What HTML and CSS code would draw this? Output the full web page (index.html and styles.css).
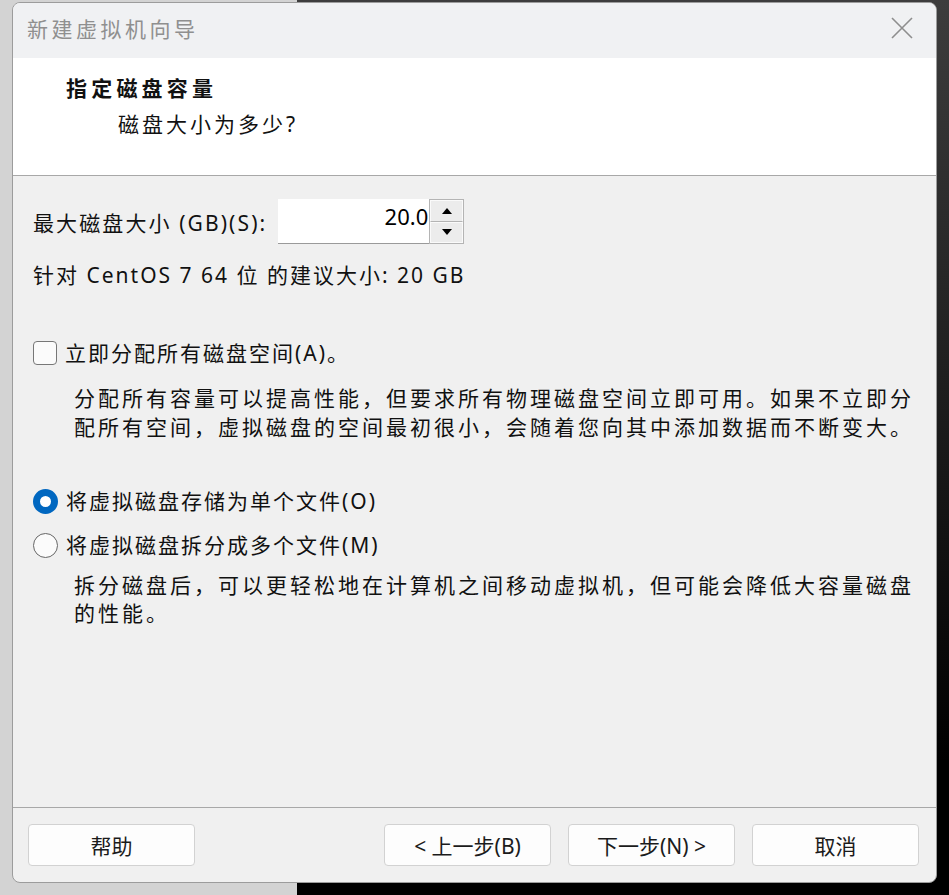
FILE: index.html
```html
<!DOCTYPE html>
<html lang="zh-CN">
<head>
    <meta charset="UTF-8">
    <meta name="viewport" content="width=device-width, initial-scale=1.0">
    <title>新建虚拟机向导</title>
    <link rel="stylesheet" href="styles.css">
</head>
<body>

    <div class="desktop">
        <div class="wizard">
            <div class="titlebar">
                <span class="titlebar-text">新建虚拟机向导</span>
                <svg class="close-btn" width="22" height="22" viewBox="0 0 22 22">
                    <path d="M1 1 L21 21 M21 1 L1 21" stroke="#8e8e8e" stroke-width="1.6" fill="none"/>
                </svg>
            </div>

            <div class="page-header">
                <div class="page-title">指定磁盘容量</div>
                <div class="page-subtitle">磁盘大小为多少?</div>
            </div>

            <div class="page-body">
                <div class="size-row">
                    <label class="size-label">最大磁盘大小 (GB)(S):</label>
                    <div class="spinbox">
                        <div class="spin-value">20.0</div>
                        <div class="spin-buttons">
                            <div class="spin-btn">
                                <svg width="10" height="6" viewBox="0 0 10 6"><path d="M0 6 L5 0 L10 6 Z" fill="#000"/></svg>
                            </div>
                            <div class="spin-btn">
                                <svg width="10" height="6" viewBox="0 0 10 6"><path d="M0 0 L5 6 L10 0 Z" fill="#000"/></svg>
                            </div>
                        </div>
                    </div>
                </div>
                <div class="hint">针对 CentOS 7 64 位 的建议大小: 20 GB</div>

                <div class="option option-check">
                    <span class="checkbox"></span>
                    <span class="option-label">立即分配所有磁盘空间(A)。</span>
                </div>
                <p class="option-desc">分配所有容量可以提高性能，但要求所有物理磁盘空间立即可用。如果不立即分配所有空间，虚拟磁盘的空间最初很小，会随着您向其中添加数据而不断变大。</p>

                <div class="option option-radio-first">
                    <span class="radio checked"></span>
                    <span class="option-label">将虚拟磁盘存储为单个文件(O)</span>
                </div>
                <div class="option">
                    <span class="radio"></span>
                    <span class="option-label">将虚拟磁盘拆分成多个文件(M)</span>
                </div>
                <p class="option-desc option-desc-tight">拆分磁盘后，可以更轻松地在计算机之间移动虚拟机，但可能会降低大容量磁盘的性能。</p>
            </div>

            <div class="page-footer">
                <button class="btn">帮助</button>
                <div class="nav-buttons">
                    <button class="btn">&lt; 上一步(B)</button>
                    <button class="btn">下一步(N) &gt;</button>
                    <button class="btn">取消</button>
                </div>
            </div>
        </div>
    </div>

</body>
</html>
```

FILE: styles.css
```css
body {
    margin: 0;
    font-family: "Noto Sans", "Noto Sans CJK SC", sans-serif;
}

.desktop {
    width: 949px;
    height: 895px;
    padding: 2px 12px 0 12px;
    box-sizing: border-box;
    background:
        linear-gradient(to right, #d3d3d3 0, #d3d3d3 297px, transparent 297px),
        linear-gradient(#3d3d3d, #000 85%);
}

.wizard {
    width: 925px;
    height: 881px;
    display: flex;
    flex-direction: column;
    border: 1px solid #9c9c9c;
    border-radius: 8px;
    overflow: hidden;
    background: #f0f0f0;
    box-sizing: border-box;
}

.titlebar {
    height: 55px;
    display: flex;
    align-items: center;
    justify-content: space-between;
    padding: 0 23px 5px 14px;
    box-sizing: border-box;
    background: #f0f1f3;
}

.titlebar-text {
    font-family: "Noto Sans CJK SC", sans-serif;
    font-size: 21px;
    color: #8f8f8f;
    letter-spacing: 3.5px;
}

.page-header {
    height: 118px;
    background: #fff;
    border-bottom: 1px solid #a8a8a8;
    padding: 15px 0 0 53px;
    box-sizing: border-box;
}

.page-title {
    font-size: 21px;
    font-weight: 700;
    color: #111;
    letter-spacing: 4.2px;
    line-height: 30px;
}

.page-subtitle {
    font-size: 21px;
    color: #111;
    letter-spacing: 3px;
    line-height: 30px;
    margin: 6px 0 0 52px;
}

.page-body {
    flex: 1;
    padding: 23px 0 0 20px;
    font-size: 21px;
    color: #111;
}

.size-row {
    display: flex;
    align-items: center;
    gap: 11px;
}

.size-label {
    letter-spacing: 2.1px;
}

.spinbox {
    display: flex;
    height: 45px;
}

.spin-value {
    width: 151px;
    background: #fff;
    border-bottom: 1px solid #9a9a9a;
    box-sizing: border-box;
    text-align: right;
    padding-right: 1px;
    font-size: 22px;
    line-height: 34px;
    color: #000;
}

.spin-buttons {
    width: 35px;
    display: flex;
    flex-direction: column;
    border: 1px solid #b4b4b4;
    box-sizing: border-box;
}

.spin-btn {
    flex: 1;
    display: flex;
    align-items: center;
    justify-content: center;
    background: #ececec;
    border: 1px solid #fafafa;
    border-bottom-color: #b4b4b4;
}

.spin-btn + .spin-btn {
    border-bottom-color: #fafafa;
}

.hint {
    margin-top: 16px;
    line-height: 30px;
    letter-spacing: 2px;
}

.option {
    display: flex;
    align-items: center;
    gap: 8px;
    line-height: 30px;
    height: 44px;
    letter-spacing: 2px;
}

.option-check {
    margin-top: 41px;
}

.option-radio-first {
    margin-top: 37px;
}

.checkbox {
    width: 24px;
    height: 24px;
    border: 1.5px solid #777;
    border-radius: 4px;
    background: #fbfbfb;
    box-sizing: border-box;
}

.radio {
    width: 25px;
    height: 25px;
    border: 1.5px solid #666;
    border-radius: 50%;
    background: #fbfbfb;
    box-sizing: border-box;
}

.radio.checked {
    border: 7px solid #0067c0;
    background: #fff;
}

.option-desc {
    margin: 9px 18px 0 41px;
    line-height: 29px;
    letter-spacing: 3px;
}

.option-desc-tight {
    margin-top: 4px;
    line-height: 28px;
}

.page-footer {
    height: 75px;
    display: flex;
    justify-content: space-between;
    align-items: flex-start;
    padding: 16px 17px 0 15px;
    border-top: 1px solid #a8a8a8;
    box-sizing: border-box;
}

.nav-buttons {
    display: flex;
    gap: 17px;
}

.btn {
    width: 167px;
    height: 42px;
    background: #fdfdfd;
    border: 1px solid #d2d2d2;
    border-radius: 4px;
    font-family: "Noto Sans", "Noto Sans CJK SC", sans-serif;
    font-size: 21px;
    color: #1b1b1b;
    padding: 0;
}
```
